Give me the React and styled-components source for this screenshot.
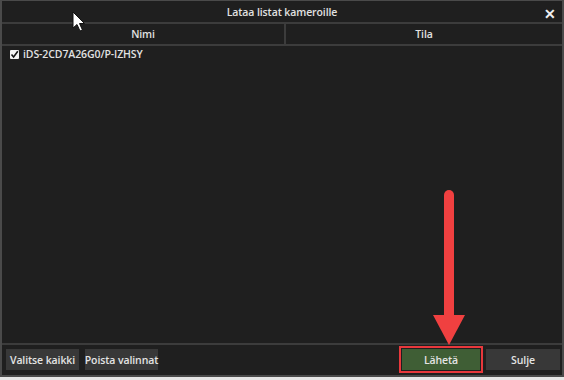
import * as React from "react";
import styled, { createGlobalStyle } from "styled-components";

const GlobalStyle = createGlobalStyle`
  html, body {
    margin: 0;
    padding: 0;
    background: #e6e6e6;
    font-family: "Open Sans", "Noto Sans", sans-serif;
  }
`;

const Stage = styled.div`
  position: relative;
  width: 564px;
  height: 380px;
`;

const Dialog = styled.div`
  box-sizing: border-box;
  width: 564px;
  height: 377px;
  background: #1f1f1f;
  border: 2px solid #4a4a4a;
  border-top-width: 1px;
  display: flex;
  flex-direction: column;
  color: #e2e2e2;
  font-size: 10.5px;
  font-weight: 600;
  letter-spacing: -0.1px;
  white-space: nowrap;
`;

const TitleBar = styled.div`
  height: 21px;
  display: flex;
  align-items: center;
  justify-content: center;
  position: relative;
  border-bottom: 2px solid #3c3c3c;
`;

const Close = styled.span`
  position: absolute;
  right: 6px;
  top: 3px;
  font-size: 14px;
  font-weight: 700;
  color: #f0f0f0;
`;

const Header = styled.div`
  display: grid;
  grid-template-columns: 282px 1fr;
  height: 20px;
  border-bottom: 2px solid #3c3c3c;
`;

const HeadCell = styled.div`
  display: flex;
  align-items: center;
  justify-content: center;
  border-left: ${(p) => (p.divider ? "2px solid #3c3c3c" : "none")};
`;

const List = styled.div`
  flex: 1;
  padding: 0 8px;
  border-bottom: 2px solid #3c3c3c;
`;

const Row = styled.div`
  display: flex;
  align-items: center;
  gap: 4px;
  height: 16px;
`;

const Check = styled.span`
  width: 9px;
  height: 9px;
  background: #f2f2f2;
  display: inline-flex;
  align-items: center;
  justify-content: center;
  border-radius: 1px;
`;

const Footer = styled.div`
  display: flex;
  align-items: center;
  gap: 6px;
  padding: 4px 2px 5px 4px;
`;

const Spacer = styled.div`
  flex: 1;
`;

const Button = styled.div`
  box-sizing: border-box;
  height: 21px;
  width: ${(p) => p.w}px;
  display: flex;
  align-items: center;
  justify-content: center;
  background: ${(p) => (p.primary ? "#3f5e35" : "#383838")};
  color: #e4e4e4;
  outline: ${(p) => (p.highlight ? "2px solid #e8383c" : "none")};
  outline-offset: 1px;
`;

const Overlay = styled.svg`
  position: absolute;
  left: 0;
  top: 0;
  pointer-events: none;
`;

export default function App() {
  return (
    <Stage>
      <GlobalStyle />
      <Dialog>
        <TitleBar>
          Lataa listat kameroille
          <Close>✕</Close>
        </TitleBar>
        <Header>
          <HeadCell>Nimi</HeadCell>
          <HeadCell divider>Tila</HeadCell>
        </Header>
        <List>
          <Row>
            <Check>
              <svg width="9" height="9" viewBox="0 0 9 9">
                <path d="M1.5 4.5 L3.6 7 L7.8 1.2" fill="none" stroke="#111" strokeWidth="1.6" />
              </svg>
            </Check>
            iDS-2CD7A26G0/P-IZHSY
          </Row>
        </List>
        <Footer>
          <Button w={73}>Valitse kaikki</Button>
          <Button w={73}>Poista valinnat</Button>
          <Spacer />
          <Button w={78} primary highlight>Lähetä</Button>
          <Button w={74}>Sulje</Button>
        </Footer>
      </Dialog>
      <Overlay width="564" height="380" viewBox="0 0 564 380">
        <line x1="449" y1="195" x2="449" y2="318" stroke="#f04040" strokeWidth="10" strokeLinecap="round" />
        <polygon points="433,315 465,315 449,345" fill="#f04040" />
        <path
          d="M73 12 L73 28 L77 24.5 L80 31 L82.5 30 L79.5 23.5 L84.5 23.5 Z"
          fill="#ffffff"
          stroke="#111"
          strokeWidth="1"
        />
      </Overlay>
    </Stage>
  );
}
